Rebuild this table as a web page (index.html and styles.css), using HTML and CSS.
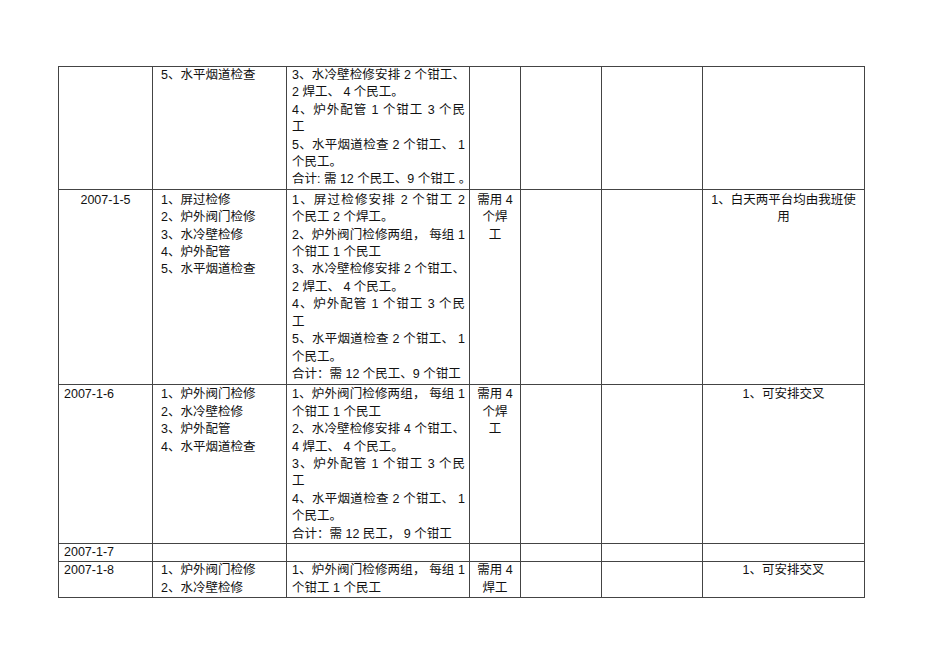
FILE: index.html
```html
<!DOCTYPE html>
<html lang="zh">
<head>
<meta charset="utf-8">
<title>检修安排</title>
<link rel="stylesheet" href="styles.css">
</head>
<body>
<div class="page">
<table class="sched">
  <colgroup>
    <col class="w1"><col class="w2"><col class="w3"><col class="w4"><col class="w5"><col class="w6"><col class="w7">
  </colgroup>
  <tbody>
    <tr class="row-top">
      <td class="date"></td>
      <td class="items"><div class="ln">5、水平烟道检查</div></td>
      <td class="plan">
        <div class="ln j">3、水冷壁检修安排 2 个钳工、</div>
        <div class="ln">2 焊工、 4 个民工。</div>
        <div class="ln j">4、炉外配管 1 个钳工 3 个民</div>
        <div class="ln">工</div>
        <div class="ln j">5、水平烟道检查 2 个钳工、 1</div>
        <div class="ln">个民工。</div>
        <div class="ln">合计: 需 12 个民工、9 个钳工 。</div>
      </td>
      <td class="need"></td>
      <td></td>
      <td></td>
      <td class="note"></td>
    </tr>
    <tr class="row-b">
      <td class="date center">2007-1-5</td>
      <td class="items">
        <div class="ln">1、屏过检修</div>
        <div class="ln">2、炉外阀门检修</div>
        <div class="ln">3、水冷壁检修</div>
        <div class="ln">4、炉外配管</div>
        <div class="ln">5、水平烟道检查</div>
      </td>
      <td class="plan">
        <div class="ln j">1、屏过检修安排 2 个钳工 2</div>
        <div class="ln">个民工 2 个焊工。</div>
        <div class="ln j">2、炉外阀门检修两组， 每组 1</div>
        <div class="ln">个钳工 1 个民工</div>
        <div class="ln j">3、水冷壁检修安排 2 个钳工、</div>
        <div class="ln">2 焊工、 4 个民工。</div>
        <div class="ln j">4、炉外配管 1 个钳工 3 个民</div>
        <div class="ln">工</div>
        <div class="ln j">5、水平烟道检查 2 个钳工、 1</div>
        <div class="ln">个民工。</div>
        <div class="ln">合计：需 12 个民工、9 个钳工</div>
      </td>
      <td class="need center">
        <div class="ln">需用 4</div>
        <div class="ln">个焊</div>
        <div class="ln">工</div>
      </td>
      <td></td>
      <td></td>
      <td class="note center">
        <div class="ln">1、白天两平台均由我班使</div>
        <div class="ln">用</div>
      </td>
    </tr>
    <tr class="row-a">
      <td class="date">2007-1-6</td>
      <td class="items">
        <div class="ln">1、炉外阀门检修</div>
        <div class="ln">2、水冷壁检修</div>
        <div class="ln">3、炉外配管</div>
        <div class="ln">4、水平烟道检查</div>
      </td>
      <td class="plan">
        <div class="ln j">1、炉外阀门检修两组， 每组 1</div>
        <div class="ln">个钳工 1 个民工</div>
        <div class="ln j">2、水冷壁检修安排 4 个钳工、</div>
        <div class="ln">4 焊工、 4 个民工。</div>
        <div class="ln j">3、炉外配管 1 个钳工 3 个民</div>
        <div class="ln">工</div>
        <div class="ln j">4、水平烟道检查 2 个钳工、 1</div>
        <div class="ln">个民工。</div>
        <div class="ln">合计：需 12 民工， 9 个钳工</div>
      </td>
      <td class="need center">
        <div class="ln">需用 4</div>
        <div class="ln">个焊</div>
        <div class="ln">工</div>
      </td>
      <td></td>
      <td></td>
      <td class="note center">
        <div class="ln">1、可安排交叉</div>
      </td>
    </tr>
    <tr class="row-c">
      <td class="date"><div class="ln">2007-1-7</div></td>
      <td class="items"></td>
      <td class="plan"></td>
      <td class="need"></td>
      <td></td>
      <td></td>
      <td class="note"></td>
    </tr>
    <tr class="row-c">
      <td class="date">2007-1-8</td>
      <td class="items">
        <div class="ln">1、炉外阀门检修</div>
        <div class="ln">2、水冷壁检修</div>
      </td>
      <td class="plan">
        <div class="ln j">1、炉外阀门检修两组， 每组 1</div>
        <div class="ln">个钳工 1 个民工</div>
      </td>
      <td class="need center">
        <div class="ln">需用 4</div>
        <div class="ln">焊工</div>
      </td>
      <td></td>
      <td></td>
      <td class="note center">
        <div class="ln">1、可安排交叉</div>
      </td>
    </tr>
  </tbody>
</table>
</div>
</body>
</html>
```

FILE: styles.css
```css
html, body {
  margin: 0;
  padding: 0;
  background: #ffffff;
}

.page {
  padding: 66px 0 0 58px;
}

.sched {
  border-collapse: collapse;
  table-layout: fixed;
  width: 806px;
  font-family: "Liberation Sans", "Noto Sans CJK SC", sans-serif;
  font-size: 12.5px;
  line-height: 17.4px;
  color: #111111;
}

.w1 { width: 94px; }
.w2 { width: 134px; }
.w3 { width: 183px; }
.w4 { width: 51px; }
.w5 { width: 81px; }
.w6 { width: 101px; }
.w7 { width: 162px; }

.sched td {
  border: 1px solid #444444;
  vertical-align: top;
  padding: 1px 5px 0 5px;
}

.row-top td {
  padding-top: 0;
}

.row-b td {
  padding-top: 2px;
  padding-bottom: 1px;
}

.row-c td {
  padding-top: 0;
  padding-bottom: 0;
}

.sched td.items {
  padding-left: 8px;
}

.sched td.plan {
  padding-right: 4px;
}

.sched td.need {
  padding-left: 2px;
  padding-right: 2px;
}

.center {
  text-align: center;
}

.ln {
  white-space: nowrap;
}

.j {
  text-align: justify;
  text-align-last: justify;
}
```
